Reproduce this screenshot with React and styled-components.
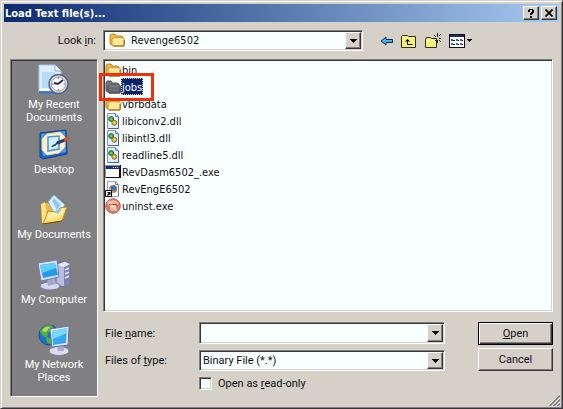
import React, { useState } from "react";
import styled, { createGlobalStyle, css } from "styled-components";

const face = "#d5d1c9";
const paper = "#f9ffff";
const ink = "#101010";
const shade = "#80807c";
const dark = "#38343c";

const Global = createGlobalStyle`
  * { box-sizing: border-box; }
  body { margin: 0; background: ${face}; }
  body, button, input, select {
    font-family: Roboto, "Liberation Sans", Arial, sans-serif;
    font-size: 11px;
    line-height: 13px;
    color: ${ink};
  }
`;

const tahoma = css`
  font-family: "DejaVu Sans Condensed", "DejaVu Sans", Tahoma, sans-serif;
`;

const sunken = css`
  border: 1px solid;
  border-color: ${shade} #fff #fff ${shade};
  box-shadow: inset 1px 1px 0 ${dark}, inset -1px -1px 0 ${face};
`;

const raised = css`
  border: 1px solid;
  border-color: #fff ${dark} ${dark} #fff;
  box-shadow: inset -1px -1px 0 ${shade};
`;

const Dialog = styled.main`
  position: relative;
  display: flex;
  flex-direction: column;
  min-height: 100vh;
  padding: 2px 2px 11px;
  background: ${face};
  border: 1px solid;
  border-color: ${face} ${dark} ${dark} ${face};
  box-shadow: inset 1px 1px 0 #fff, inset -1px -1px 0 ${shade};
`;

const TitleBar = styled.header`
  display: flex;
  align-items: center;
  gap: 2px;
  height: 18px;
  margin: 1px 1px 0;
  padding: 0 2px 0 1px;
  background: linear-gradient(90deg, #0c2a70, #a6caf0);
`;

const Title = styled.h1`
  flex: 1;
  margin: 0;
  padding-top: 2px;
  ${tahoma}
  font-size: 11px;
  line-height: 16px;
  font-weight: bold;
  color: #fff;
`;

const CaptionButton = styled.button`
  display: grid;
  place-items: center;
  width: 16px;
  height: 14px;
  padding: 0;
  background: ${face};
  ${raised}
`;

const Content = styled.div`
  flex: 1;
  display: grid;
  grid-template-columns: 88px minmax(0, 1fr);
  grid-template-rows: 21px 1fr;
  gap: 8px 5px;
  padding: 8px 7px 0 7px;
`;

const LookLabel = styled.label`
  justify-self: end;
  align-self: center;
  padding-right: 2px;
`;

const Toolbar = styled.div`
  display: flex;
  align-items: center;
`;

const Tools = styled.div`
  display: flex;
  align-items: center;
  gap: 8px;
  width: 190px;
  padding-left: 17px;
`;

const ToolButton = styled.button`
  display: flex;
  align-items: center;
  gap: 2px;
  padding: 0;
  border: 0;
  background: none;
`;

const ComboBox = styled.div`
  position: relative;
  display: flex;
  flex: 1;
  min-width: 0;
  height: ${(p) => p.$height || 21}px;
  padding: 2px;
  background: ${paper};
  ${sunken}
  select, input {
    flex: 1;
    width: 100%;
    min-width: 0;
    padding: 0 18px 0 ${(p) => (p.$icon ? 25 : 1)}px;
    border: 0;
    outline: 0;
    appearance: none;
    background: none;
    ${(p) => p.$icon && tahoma}
  }
`;

const ComboIcon = styled.span`
  position: absolute;
  left: 5px;
  top: 1px;
  height: 16px;
  pointer-events: none;
`;

const DropArrow = styled.span`
  position: absolute;
  top: 1px;
  right: 1px;
  bottom: 1px;
  width: 16px;
  display: grid;
  place-items: center;
  background: ${face};
  pointer-events: none;
  ${raised}
`;

const Places = styled.nav`
  padding: 4px 0 3px;
  background: #808082;
  border: 1px solid;
  border-color: ${shade} #fff #fff ${shade};
  box-shadow: inset 1px 1px 0 ${dark};
`;

const Place = styled.button`
  display: flex;
  flex-direction: column;
  align-items: center;
  gap: 2px;
  width: 100%;
  height: 65px;
  padding: 0;
  border: 0;
  background: none;
  color: #fff;
  text-align: center;
  white-space: pre-line;
`;

const Main = styled.div`
  display: flex;
  flex-direction: column;
  min-width: 0;
`;

const FileList = styled.ul`
  flex: 1;
  min-height: 160px;
  margin: 0;
  padding: 1px;
  list-style: none;
  background: ${paper};
  ${sunken}
`;

const FileRow = styled.li`
  position: relative;
  height: 17px;
`;

const FileButton = styled.button`
  display: flex;
  align-items: center;
  height: 17px;
  padding: 0;
  border: 0;
  background: none;
  ${tahoma}
  span {
    padding: 3px 1px 1px;
    ${(p) => p.$selected && css`
      color: #fff;
      background: #0a246a;
      outline: 1px dotted #d8c878;
      outline-offset: -1px;
    `}
  }
`;

const Highlight = styled.div`
  position: absolute;
  left: -6px;
  top: -5px;
  width: 55px;
  height: 28px;
  border: 3px solid #f03008;
  pointer-events: none;
  z-index: 1;
`;

const Form = styled.form`
  display: flex;
  align-items: flex-start;
  gap: 33px;
  padding: 10px 0 7px;
`;

const Fields = styled.div`
  flex: 1;
  display: grid;
  grid-template-columns: 94px minmax(0, 1fr);
  gap: 6px 0;
  align-items: center;
  padding-left: 2px;
`;

const CheckLabel = styled.label`
  grid-column: 2;
  display: flex;
  align-items: center;
  gap: 6px;
`;

const CheckBox = styled.input`
  appearance: none;
  width: 13px;
  height: 13px;
  margin: 0;
  background: ${paper};
  ${sunken}
  &:checked { background: #0a246a; }
`;

const Actions = styled.div`
  display: flex;
  flex-direction: column;
  gap: 3px;
  width: 75px;
`;

const PushButton = styled.button`
  height: 23px;
  padding: 0 0 1px;
  background: ${face};
  ${raised}
  ${(p) => p.$primary && css`
    border-color: #000;
    box-shadow: inset 1px 1px 0 #fff, inset -1px -1px 0 ${dark}, inset -2px -2px 0 ${shade};
  `}
`;

const Grip = styled.svg`
  position: absolute;
  right: 2px;
  bottom: 2px;
`;

const Down = () => (
  <svg width="7" height="4" shapeRendering="crispEdges" aria-hidden="true"><path d="M0 0h7v1H6v1H5v1H4v1H3V3H2V2H1V1H0z" fill="#000" /></svg>
);

const Folder = ({ dim }) => (
  <svg width="16" height="16" viewBox="0 0 16 16" aria-hidden="true">
    <path d="M1 4q0-2 2-2h3l1 2h5q2 0 2 2v7H3q-2 0-2-2z" fill={dim ? "#72747c" : "#edbd3d"} stroke={dim ? "#4c5058" : "#b88a24"} />
    <path d="M4 6h10q1.500 0 1.500 1.500v5q0 1.500-1.500 1.500H4.500Q3 14 3 12.500V7z" fill={dim ? "#6c6c70" : "#ffe997"} stroke={dim ? "#55565c" : "#c39228"} />
    <path d="M4.500 7H14" stroke={dim ? "#84848a" : "#fff7ca"} />
    <path d="M4 14h11V8" fill="none" stroke={dim ? "#44464c" : "#93671c"} />
  </svg>
);

const Dll = () => (
  <svg width="16" height="16" viewBox="0 0 16 16" aria-hidden="true">
    <path d="M2.500.5h8l3 3v12h-11z" fill="#e5f0ff" stroke="#7894c8" />
    <path d="M13.500 4v11.500h-10" fill="none" stroke="#44609c" />
    <path d="M10.500.5v3h3" fill="#b7d0f5" stroke="#6685bc" />
    <circle cx="6.200" cy="6" r="2.500" fill="#4da247" stroke="#28742a" />
    <circle cx="6.200" cy="6" r=".7" fill="#c5e8c5" />
    <circle cx="9.300" cy="9.800" r="2.500" fill="#d3b53c" stroke="#8c7721" />
    <circle cx="9.300" cy="9.800" r=".7" fill="#fff" />
  </svg>
);

const Program = () => (
  <svg width="16" height="16" viewBox="0 0 16 16" shapeRendering="crispEdges" aria-hidden="true">
    <path d="M0 1h16v13H0z" fill="#101018" /><path d="M1 5h13v8H1z" fill="#fff" /><path d="M1 2h14v3H1z" fill="#142e7c" />
    <path d="M8 3h1v1H8zm2 0h1v1h-1zm2 0h1v1h-1z" fill="#fff" /><path d="M0 1h15v1H0zM0 2h1v12H0z" fill="#888c94" />
  </svg>
);

const Shortcut = () => (
  <svg width="16" height="16" viewBox="0 0 16 16" aria-hidden="true">
    <path d="M2.500.5h8l3 3v12h-11z" fill="#f4f6ff" stroke="#98a4c8" />
    <path d="M10.500.5v3h3M13.500 4v11.500" fill="none" stroke="#6b7aab" />
    <circle cx="8.200" cy="8" r="4" fill="#e66d27" /><circle cx="8.400" cy="7.200" r="2.700" fill="#297bc9" />
    <path d="M4 6q2 0 2 2.500T10 11q-4 3-6-1z" fill="#f0a32c" />
    <path d="M.5 9.500h6v6h-6z" fill="#fff" stroke="#000" /><path d="M2 11h3.500v3.500l-1-1-2 1.500L2 14l1.500-1.500z" fill="#000" />
  </svg>
);

const Uninstall = () => (
  <svg width="16" height="16" viewBox="0 0 16 16" aria-hidden="true">
    <circle cx="8" cy="8" r="7.300" fill="#df8068" stroke="#a8665c" />
    <path d="M2 5q6-6 12 0l-2 2H4z" fill="#f1b49b" />
    <path d="M4.500 7h7L11 13H5z" fill="#f9ddcf" stroke="#b46a60" strokeWidth=".7" />
    <path d="M4 6.500h8" stroke="#c0392c" /><path d="M7 9v3m2-3v3" stroke="#d09080" /><path d="M3 3l9 10" stroke="#fff" strokeOpacity=".3" strokeWidth="2" />
  </svg>
);

const Recent = () => (
  <svg width="32" height="32" viewBox="0 0 32 32" aria-hidden="true">
    <path d="M1 1h16l6 6v22H1z" fill="#dceeff" stroke="#a6c8ef" />
    <path d="M4 8h13v16H4z" fill="#b8dcfc" /><path d="M17 1v6h6" fill="#f8fcff" stroke="#8ab0dd" />
    <path d="M1 27h21v3H1z" fill="#4b78bd" /><path d="M2 26h12" stroke="#fff" strokeWidth="2" />
    <circle cx="20.500" cy="20" r="9.500" fill="#d5d8e0" stroke="#53617d" strokeWidth="1.500" />
    <circle cx="20.500" cy="20" r="7" fill="#f8fbff" stroke="#98a9c7" />
    <path d="M20 20l5-4M20 20l-4-1" stroke="#22314c" strokeWidth="2" /><path d="M20.500 13v2m0 10v2M13.500 20h2m10 0h2" stroke="#e98a3a" strokeWidth="1.500" />
  </svg>
);

const Desktop = () => (
  <svg width="32" height="32" viewBox="0 0 32 32" aria-hidden="true">
    <path d="M2 4l26-3 1 24-24 5-3-2z" fill="#1764c6" stroke="#0e3f94" />
    <path d="M3 5l24-3 1 21-23 4z" fill="#4c9bec" />
    <path d="M9 5l13-2 5 5v10l-6 6-12 2-5-5V10z" fill="#fff1c8" stroke="#e8d194" />
    <path d="M10 8l11-1v13l-11 2z" fill="#d5edff" stroke="#4198df" strokeWidth="1.500" />
    <path d="M16 16l3-3 2 2z" fill="#23324e" /><path d="M19 14l8-3" stroke="#283c70" strokeWidth="3" /><path d="M26 11l5-2" stroke="#de5130" strokeWidth="3" />
    <path d="M14 18q1-2 4-2" fill="none" stroke="#26436f" strokeWidth="1.500" />
  </svg>
);

const Documents = () => (
  <svg width="32" height="32" viewBox="0 0 32 32" aria-hidden="true">
    <path d="M3 10l6-2 4 2 12 3-3 15-18 2z" fill="#eeb83e" stroke="#ad7716" />
    <path d="M3 10l4-2 3 19-6 2z" fill="#ffe18a" />
    <path d="M10 8L16 1l11 10-9 11z" fill="#dff3ff" stroke="#7cafe3" /><path d="M14 7l2-3 7 7-4 5z" fill="#8dc8f7" />
    <path d="M5 30l5-13 9 1 3-4 7-1-5 14z" fill="#ffde73" stroke="#c08a24" />
    <path d="M11 18l8 1 3-4 5-1-3 7-15 5z" fill="#fff0a7" /><path d="M16 17l8-2-4 5z" fill="#8ac5ef" /><path d="M5 30l19-3" stroke="#604916" />
  </svg>
);

const Computer = () => (
  <svg width="34" height="32" viewBox="0 0 34 32" aria-hidden="true">
    <path d="M19 5l9-3 5 3v20l-7 3-7-3z" fill="#b9bedf" stroke="#65698f" />
    <path d="M27 8l6-3v20l-6 3z" fill="#7c82b1" /><path d="M20 6l8-3 5 2-6 3z" fill="#e6e9f8" />
    <path d="M28 11l4-2m-4 6l4-2m-4 6l4-2" stroke="#e2e7fb" strokeWidth="1.500" />
    <ellipse cx="13" cy="27" rx="10" ry="4" fill="#d5d7ec" stroke="#777ca1" /><path d="M10 19l8-1 1 7-8 2z" fill="#a4a9cd" />
    <path d="M1 4l19-3 2 17-18 4z" fill="#dce2f7" stroke="#747ead" />
    <path d="M3 6l15-2 3 12-15 3z" fill="#219be9" /><path d="M3 6l15-2 1 5-14 5z" fill="#61cffb" />
  </svg>
);

const Network = () => (
  <svg width="32" height="32" viewBox="0 0 32 32" aria-hidden="true">
    <circle cx="11" cy="11" r="10" fill="#1672d0" stroke="#174a9b" />
    <path d="M3 5q6-6 12-3l-1 5-4 2-1 5-4-2-3-4zM9 13l5 2-1 6-5-4z" fill="#58ad39" /><path d="M4 7q3-5 8-4l-4 5z" fill="#b8dc62" />
    <ellipse cx="21" cy="27" rx="10" ry="4.500" fill="#dcddeb" stroke="#7c80a4" /><path d="M19 20l6-1 1 8h-6z" fill="#a6a9cb" />
    <path d="M12 5l19-3-1 19-16 2z" fill="#e5e9f8" stroke="#6874a5" />
    <path d="M14 7l15-3-1 15-13 2z" fill="#35a9ee" /><path d="M14 7l15-3v5l-14 6z" fill="#78d8fc" />
  </svg>
);

const Back = () => (
  <svg width="13" height="12" viewBox="0 0 13 12" aria-hidden="true">
    <path d="M1 6l5-4v2.500h6.500v3H6V10z" fill="#43b8fb" stroke="#10264c" />
  </svg>
);
const UpFolder = () => (
  <svg width="16" height="14" viewBox="0 0 16 14" aria-hidden="true">
    <path d="M.5 2.500l1-1h5l1 1h7v11H.5z" fill="#faf178" stroke="#302e10" /><path d="M1 4.500h6l1-1" stroke="#fff9b6" fill="none" />
    <path d="M6.500 6v4.500h5" fill="none" stroke="#000" /><path d="M4 7.500h5L6.500 5z" fill="#000" />
  </svg>
);
const NewFolder = () => (
  <svg width="16" height="16" viewBox="0 0 16 16" aria-hidden="true">
    <path d="M.5 6.500l1-2h4l1 1h5v9H.5z" fill="#faf178" stroke="#302e10" /><path d="M1 7.500h10" stroke="#fffbc0" />
    <path d="M12.500 0v4m0 3v3M8 5.500h3m3 0h2M9 2l2 2m5-3l-2 2m-4 5l1-1m3 0l2 2" stroke="#222" />
  </svg>
);
const Views = () => (
  <svg width="16" height="14" viewBox="0 0 16 14" shapeRendering="crispEdges" aria-hidden="true">
    <path d="M0 0h16v14H0z" fill="#101014" /><path d="M1 3h14v10H1z" fill="#fff" /><path d="M1 1h14v2H1z" fill="#142e78" />
    <path d="M2 5h2v2H2zm5 0h2v2H7zm4 0h2v2h-2zM2 9h2v2H2zm5 0h2v2H7zm4 0h2v2h-2z" fill="#3668bd" />
    <path d="M4 6h2M9 6h1M13 6h1M4 10h2M9 10h1M13 10h1" stroke="#111" />
  </svg>
);
const SmallDown = () => (
  <svg width="5" height="3" shapeRendering="crispEdges" aria-hidden="true"><path d="M0 0h5v1H4v1H3v1H2V2H1V1H0z" /></svg>
);

const places = [
  ["My Recent\nDocuments", Recent],
  ["Desktop", Desktop],
  ["My Documents", Documents],
  ["My Computer", Computer],
  ["My Network\nPlaces", Network],
];

const files = [
  ["bin", Folder],
  ["jobs", Folder],
  ["vbrbdata", Folder],
  ["libiconv2.dll", Dll],
  ["libintl3.dll", Dll],
  ["readline5.dll", Dll],
  ["RevDasm6502_.exe", Program],
  ["RevEngE6502", Shortcut],
  ["uninst.exe", Uninstall],
];

export default function App() {
  const [selected, setSelected] = useState("jobs");
  return (
    <Dialog>
      <Global />
      <TitleBar>
        <Title>Load Text file(s)...</Title>
        <CaptionButton aria-label="Help">
          <svg width="8" height="9" viewBox="0 0 8 9" shapeRendering="crispEdges"><path d="M1 1h1V0h4v1h1v3H6v1H5v1H3V4h1V3h1V1H3v2H1zM3 7h2v2H3z" fill="#000" /></svg>
        </CaptionButton>
        <CaptionButton aria-label="Close">
          <svg width="8" height="8" viewBox="0 0 8 8"><path d="M.5.5l7 7m0-7l-7 7" stroke="#000" strokeWidth="1.700" /></svg>
        </CaptionButton>
      </TitleBar>
      <Content>
        <LookLabel htmlFor="look">Look <u>i</u>n:</LookLabel>
        <Toolbar>
          <ComboBox $icon>
            <ComboIcon><Folder /></ComboIcon>
            <select id="look"><option>Revenge6502</option></select>
            <DropArrow><Down /></DropArrow>
          </ComboBox>
          <Tools>
            <ToolButton aria-label="Back"><Back /></ToolButton>
            <ToolButton aria-label="Up one level"><UpFolder /></ToolButton>
            <ToolButton aria-label="New folder"><NewFolder /></ToolButton>
            <ToolButton aria-label="Views"><Views /><SmallDown /></ToolButton>
          </Tools>
        </Toolbar>
        <Places aria-label="Places">
          {places.map(([name, Icon]) => (
            <Place key={name} type="button"><Icon />{name}</Place>
          ))}
        </Places>
        <Main>
          <FileList>
            {files.map(([name, Icon]) => (
              <FileRow key={name}>
                <FileButton type="button" $selected={selected === name} onClick={() => setSelected(name)}>
                  <Icon {...(Icon === Folder ? { dim: selected === name } : {})} />
                  <span>{name}</span>
                </FileButton>
                {name === "jobs" && <Highlight />}
              </FileRow>
            ))}
          </FileList>
          <Form onSubmit={(e) => e.preventDefault()}>
            <Fields>
              <label htmlFor="name">File <u>n</u>ame:</label>
              <ComboBox $height={22}>
                <input id="name" type="text" />
                <DropArrow><Down /></DropArrow>
              </ComboBox>
              <label htmlFor="type">Files of <u>t</u>ype:</label>
              <ComboBox>
                <select id="type"><option>Binary File (*.*)</option></select>
                <DropArrow><Down /></DropArrow>
              </ComboBox>
              <CheckLabel><CheckBox type="checkbox" /><span>Open as <u>r</u>ead-only</span></CheckLabel>
            </Fields>
            <Actions>
              <PushButton $primary type="submit"><span><u>O</u>pen</span></PushButton>
              <PushButton type="button">Cancel</PushButton>
            </Actions>
          </Form>
        </Main>
      </Content>
      <Grip width="12" height="12" viewBox="0 0 12 12" aria-hidden="true">
        <path d="M0 12L12 0M4 12l8-8M8 12l4-4" stroke="#fff" /><path d="M1.500 12L12 1.500M5.500 12L12 5.500M9.500 12L12 9.500" stroke="#777" strokeWidth="1.500" />
      </Grip>
    </Dialog>
  );
}
